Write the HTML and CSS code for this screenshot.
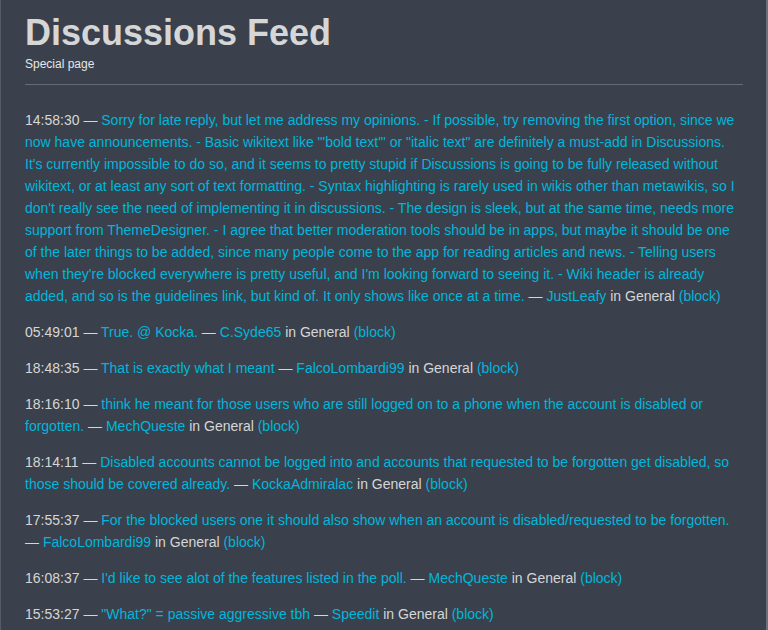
FILE: index.html
```html
<!DOCTYPE html>
<html>
<head>
<meta charset="utf-8">
<link rel="stylesheet" href="styles.css">
</head>
<body>
<div class="page">
  <header class="head">
    <h1 class="title">Discussions Feed</h1>
    <div class="sub">Special page</div>
  </header>
  <main class="feed">
    <p class="entry">14:58:30 — <a>Sorry for late reply, but let me address my opinions. - If possible, try removing the first option, since we now have announcements. - Basic wikitext like "'bold text'" or "italic text" are definitely a must-add in Discussions. It's currently impossible to do so, and it seems to pretty stupid if Discussions is going to be fully released without wikitext, or at least any sort of text formatting. - Syntax highlighting is rarely used in wikis other than metawikis, so I don't really see the need of implementing it in discussions. - The design is sleek, but at the same time, needs more support from ThemeDesigner. - I agree that better moderation tools should be in apps, but maybe it should be one of the later things to be added, since many people come to the app for reading articles and news. - Telling users when they're blocked everywhere is pretty useful, and I'm looking forward to seeing it. - Wiki header is already added, and so is the guidelines link, but kind of. It only shows like once at a time.</a> — <a>JustLeafy</a> in General <a>(block)</a></p>
    <p class="entry">05:49:01 — <a>True. @ Kocka.</a> — <a>C.Syde65</a> in General <a>(block)</a></p>
    <p class="entry">18:48:35 — <a>That is exactly what I meant</a> — <a>FalcoLombardi99</a> in General <a>(block)</a></p>
    <p class="entry">18:16:10 — <a>think he meant for those users who are still logged on to a phone when the account is disabled or forgotten.</a> — <a>MechQueste</a> in General <a>(block)</a></p>
    <p class="entry">18:14:11 — <a>Disabled accounts cannot be logged into and accounts that requested to be forgotten get disabled, so those should be covered already.</a> — <a>KockaAdmiralac</a> in General <a>(block)</a></p>
    <p class="entry">17:55:37 — <a>For the blocked users one it should also show when an account is disabled/requested to be forgotten.</a> — <a>FalcoLombardi99</a> in General <a>(block)</a></p>
    <p class="entry">16:08:37 — <a>I'd like to see alot of the features listed in the poll.</a> — <a>MechQueste</a> in General <a>(block)</a></p>
    <p class="entry">15:53:27 — <a>"What?" = passive aggressive tbh</a> — <a>Speedit</a> in General <a>(block)</a></p>
  </main>
</div>
</body>
</html>
```
FILE: styles.css
```css
html, body {
  margin: 0;
  padding: 0;
  height: 100%;
  overflow: hidden;
}
body {
  background: #3a414c;
  font-family: "Liberation Sans", Arial, sans-serif;
  color: #d6d6d6;
}
.page {
  height: 100%;
  box-sizing: border-box;
  border-left: 1px solid #565c66;
  border-right: 2px solid #6a7079;
  padding: 0 23px 0 24px;
}
.head {
  padding-top: 13px;
  padding-bottom: 12px;
  border-bottom: 1px solid #656b74;
}
.title {
  margin: 0;
  font-size: 36px;
  line-height: 40px;
  font-weight: bold;
  color: #d6d6d6;
}
.sub {
  margin-top: 3px;
  font-size: 12px;
  line-height: 16px;
  color: #e6e6e6;
}
.feed {
  padding-top: 24px;
}
.entry {
  margin: 0 0 14px 0;
  font-size: 14px;
  line-height: 22px;
}
.entry a {
  color: #00b6db;
}
```
